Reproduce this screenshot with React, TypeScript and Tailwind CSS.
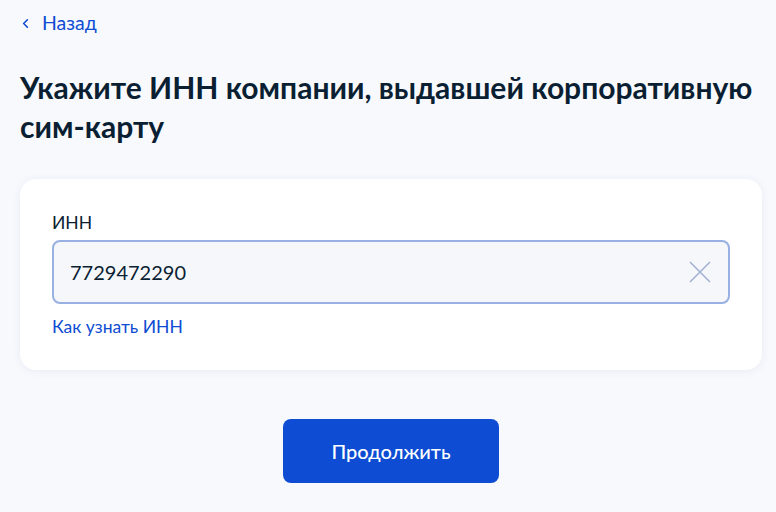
import { ChevronLeft } from 'lucide-react';

export default function App() {
  return (
    <div
      className="min-h-[512px] w-full bg-[#f8f9fd] pl-5 pr-[14px] pt-[11px] text-[#0b1f33]"
      style={{ fontFamily: 'Lato, "Noto Sans", sans-serif' }}
    >
      <button className="flex items-center gap-[9px] text-[19.5px] leading-6 text-[#0d4cd3]">
        <ChevronLeft className="h-[15px] w-[15px] -ml-[2px]" strokeWidth={2.5} />
        Назад
      </button>

      <h1 className="mt-[33px] text-[30px] font-bold leading-[39px]">
        Укажите ИНН компании, выдавшей корпоративную сим-карту
      </h1>

      <div className="mt-[33px] rounded-2xl bg-white p-8 pb-[31px] shadow-[0_1px_8px_rgba(44,76,150,0.08)]">
        <div className="text-[17.5px] leading-6">ИНН</div>
        <div className="mt-[5px] flex h-16 items-center rounded-lg border-2 border-[#99b0e3] bg-[#f5f7fa] pl-[16px] pr-[16px]">
          <span className="flex-1 text-[20px]">7729472290</span>
          <svg width="24" height="24" viewBox="0 0 24 24" fill="none" className="text-[#a3b2d4]">
            <path d="M2 2L22 22M22 2L2 22" stroke="currentColor" strokeWidth="1.6" />
          </svg>
        </div>
        <a className="mt-[11px] block text-[17.5px] leading-6 text-[#0d4cd3]">Как узнать ИНН</a>
      </div>

      <div className="mt-[49px] flex justify-center">
        <button className="h-16 w-[216px] rounded-lg bg-[#0d4cd3] text-[20px] font-medium text-white">
          Продолжить
        </button>
      </div>
    </div>
  );
}
